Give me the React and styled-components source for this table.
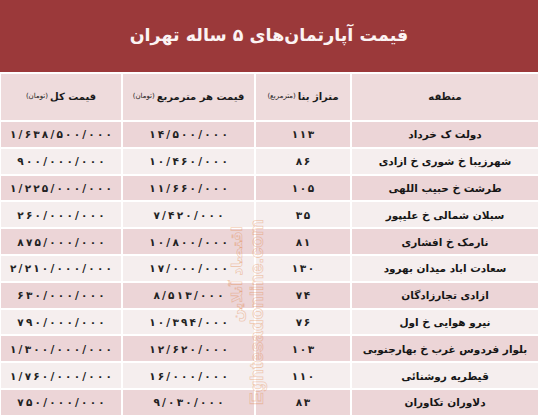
import React from 'react';
import styled, { createGlobalStyle } from 'styled-components';

const GlobalStyle = createGlobalStyle`
  html, body {
    margin: 0;
    padding: 0;
    background: #ffffff;
  }
  body {
    font-family: "DejaVu Sans", "Noto Sans", sans-serif;
  }
`;

const Page = styled.div`
  position: relative;
  width: 538px;
  height: 417px;
  overflow: hidden;
  background: #ffffff;
  direction: rtl;
`;

const TitleBar = styled.div`
  height: 72px;
  background: #9b393a;
  display: flex;
  align-items: center;
  justify-content: center;
  margin-bottom: 2px;
`;

const Title = styled.h1`
  margin: 0;
  color: #fbf3f3;
  font-size: 17.5px;
  font-weight: bold;
  font-family: "DejaVu Sans", sans-serif;
  padding-bottom: 2px;
`;

const Table = styled.div`
  display: grid;
  grid-template-columns: 186px 94px 131px 1fr;
  grid-template-rows: 46px repeat(11, 24.8px);
  gap: 2px;
  padding-left: 1px;
`;

const HeadCell = styled.div`
  background: #eedbdc;
  display: flex;
  align-items: center;
  justify-content: center;
  font-size: 10px;
  font-weight: bold;
  color: #1a1a1a;
  white-space: nowrap;
  overflow: hidden;
  padding-bottom: 2px;
`;

const Unit = styled.span`
  font-size: 7px;
  font-weight: normal;
  margin-right: 2px;
`;

const Cell = styled.div`
  background: ${({ $odd }) => ($odd ? '#ecd5d7' : '#f5eeee')};
  display: flex;
  align-items: center;
  justify-content: center;
  font-size: 10.5px;
  font-weight: bold;
  color: #161616;
  white-space: nowrap;
  overflow: hidden;
`;

const Num = styled.span`
  direction: ltr;
  display: inline-flex;
  align-items: baseline;
  gap: ${({ $wide }) => ($wide ? '2.2px' : '1.6px')};
  font-size: 10.5px;
  color: #222;
`;

const Watermark = styled.div`
  position: absolute;
  left: ${({ $x }) => $x}px;
  top: ${({ $y }) => $y}px;
  transform: rotate(-90deg);
  transform-origin: left top;
  font-family: ${({ $latin }) => ($latin ? '"Liberation Sans", sans-serif' : '"DejaVu Sans", sans-serif')};
  font-size: ${({ $size }) => $size}px;
  font-weight: bold;
  color: transparent;
  -webkit-text-stroke: 0.8px rgba(225, 125, 60, 0.35);
  white-space: nowrap;
  pointer-events: none;
  direction: ltr;
`;

const rows = [
  ['دولت ک خرداد', '۱۱۳', '۱۴/۵۰۰/۰۰۰', '۱/۶۳۸/۵۰۰/۰۰۰'],
  ['شهرزیبا خ شوری خ ازادی', '۸۶', '۱۰/۴۶۰/۰۰۰', '۹۰۰/۰۰۰/۰۰۰'],
  ['طرشت خ حبیب اللهی', '۱۰۵', '۱۱/۶۶۰/۰۰۰', '۱/۲۲۵/۰۰۰/۰۰۰'],
  ['سبلان شمالی خ علیپور', '۳۵', '۷/۴۲۰/۰۰۰', '۲۶۰/۰۰۰/۰۰۰'],
  ['نارمک خ افشاری', '۸۱', '۱۰/۸۰۰/۰۰۰', '۸۷۵/۰۰۰/۰۰۰'],
  ['سعادت اباد میدان بهرود', '۱۳۰', '۱۷/۰۰۰/۰۰۰', '۲/۲۱۰/۰۰۰/۰۰۰'],
  ['ازادی تجارزادگان', '۷۴', '۸/۵۱۳/۰۰۰', '۶۳۰/۰۰۰/۰۰۰'],
  ['نیرو هوایی خ اول', '۷۶', '۱۰/۳۹۴/۰۰۰', '۷۹۰/۰۰۰/۰۰۰'],
  ['بلوار فردوس غرب خ بهارجنوبی', '۱۰۳', '۱۲/۶۲۰/۰۰۰', '۱/۳۰۰/۰۰۰/۰۰۰'],
  ['قیطریه روشنائی', '۱۱۰', '۱۶/۰۰۰/۰۰۰', '۱/۷۶۰/۰۰۰/۰۰۰'],
  ['دلاوران تکاوران', '۸۳', '۹/۰۳۰/۰۰۰', '۷۵۰/۰۰۰/۰۰۰'],
];

function Spaced({ value, wide }) {
  return (
    <Num $wide={wide}>
      {[...value].map((ch, i) => (
        <span key={i}>{ch}</span>
      ))}
    </Num>
  );
}

export default function App() {
  return (
    <>
      <GlobalStyle />
      <Page>
        <TitleBar>
          <Title>قیمت آپارتمان‌های ۵ ساله تهران</Title>
        </TitleBar>
        <Table>
          <HeadCell>منطقه</HeadCell>
          <HeadCell>
            متراژ بنا <Unit>(مترمربع)</Unit>
          </HeadCell>
          <HeadCell>
            قیمت هر مترمربع <Unit>(تومان)</Unit>
          </HeadCell>
          <HeadCell>
            قیمت کل<Unit>(تومان)</Unit>
          </HeadCell>
          {rows.map((r, i) => (
            <React.Fragment key={i}>
              <Cell $odd={i % 2 === 0}>{r[0]}</Cell>
              <Cell $odd={i % 2 === 0}>
                <Spaced value={r[1]} />
              </Cell>
              <Cell $odd={i % 2 === 0}>
                <Spaced value={r[2]} wide />
              </Cell>
              <Cell $odd={i % 2 === 0}>
                <Spaced value={r[3]} wide />
              </Cell>
            </React.Fragment>
          ))}
        </Table>
        <Watermark $x={228} $y={322} $size={15}>اقتصاد آنلاین</Watermark>
        <Watermark $x={246} $y={405} $size={19} $latin>
          Eghtesadonline.com
        </Watermark>
      </Page>
    </>
  );
}
